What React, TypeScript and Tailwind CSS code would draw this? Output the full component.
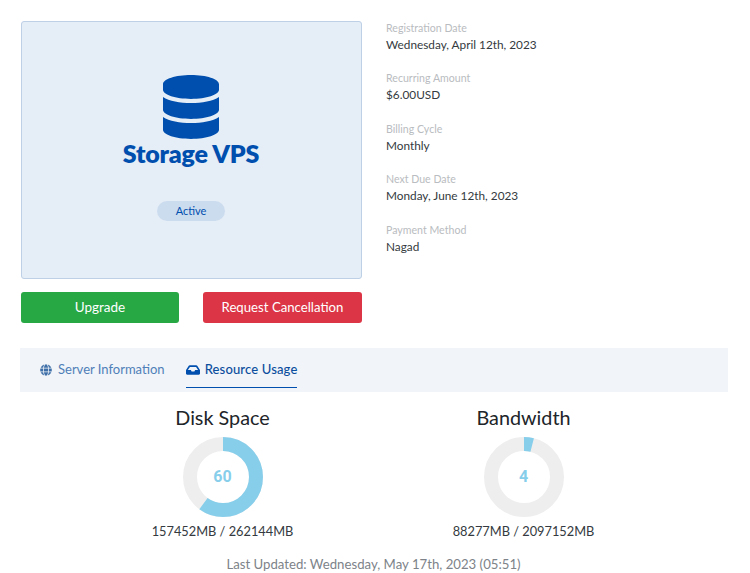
import { FaDatabase, FaGlobe, FaInbox } from "react-icons/fa";

const details = [
  { label: "Registration Date", value: "Wednesday, April 12th, 2023" },
  { label: "Recurring Amount", value: "$6.00USD" },
  { label: "Billing Cycle", value: "Monthly" },
  { label: "Next Due Date", value: "Monday, June 12th, 2023" },
  { label: "Payment Method", value: "Nagad" },
];

const usage = [
  { title: "Disk Space", percent: 60, text: "157452MB / 262144MB" },
  { title: "Bandwidth", percent: 4, text: "88277MB / 2097152MB" },
];

function Donut({ percent }: { percent: number }) {
  const radius = 33;
  const circumference = 2 * Math.PI * radius;

  return (
    <div className="relative h-20 w-20">
      <svg viewBox="0 0 80 80" className="h-20 w-20 -rotate-90">
        <circle cx="40" cy="40" r={radius} fill="none" stroke="#eeeeee" strokeWidth="14" />
        <circle
          cx="40"
          cy="40"
          r={radius}
          fill="none"
          stroke="#87ceeb"
          strokeWidth="14"
          strokeDasharray={`${(circumference * percent) / 100} ${circumference}`}
        />
      </svg>
      <span className="absolute inset-0 flex items-center justify-center font-['Roboto',sans-serif] text-base font-bold text-[#87ceeb]">
        {percent}
      </span>
    </div>
  );
}

export default function App() {
  return (
    <div className="h-[573px] w-[750px] overflow-hidden bg-white font-['Lato','Noto_Sans',sans-serif] text-[13px] text-[#343a40]">
      <div className="flex px-[21px] pt-[21px]">
        <div className="w-[341px]">
          <div className="flex h-[258px] flex-col items-center rounded-[3px] border border-[#bdd0e6] bg-[#e5edf6] pt-[53px] pr-px">
            <FaDatabase className="text-[64px] text-[#004fae]" />
            <h2 className="mt-[-1px] text-[25px] leading-[30px] font-extrabold tracking-[-0.2px] text-[#004fae]">
              Storage VPS
            </h2>
            <span className="mt-[33px] flex h-5 w-[68px] items-center justify-center rounded-full bg-[#ccdcef] text-[11px] text-[#004fae]">
              Active
            </span>
          </div>
          <div className="mt-[13px] flex justify-between">
            <button className="h-[31px] w-[158px] rounded-[3px] bg-[#28a745] text-[13.5px] text-white">
              Upgrade
            </button>
            <button className="h-[31px] w-[159px] rounded-[3px] bg-[#dc3545] text-[13.2px] text-white">
              Request Cancellation
            </button>
          </div>
        </div>
        <div className="ml-6 flex flex-col">
          {details.map((item) => (
            <div key={item.label} className="mb-[15px] h-[35.4px] -translate-y-px">
              <div className="text-[10.6px] leading-[17px] text-[#b9bcc0]">{item.label}</div>
              <div className="text-[11.8px] leading-[15px] text-[#343a40]">{item.value}</div>
            </div>
          ))}
        </div>
      </div>

      <div className="mx-5 mt-[25px] flex h-11 w-[708px] bg-[#f1f4f8] pl-5 text-[13px]">
        <div className="flex h-10 items-center gap-[6px] pt-1 text-[#4f7fb8]">
          <FaGlobe className="text-xs text-[#3f6fa8]" />
          <span>Server Information</span>
        </div>
        <div className="ml-[21px] flex h-10 items-center gap-[5px] border-b border-[#004fae] pt-1 text-[#0b4e9e]">
          <FaInbox className="text-sm text-[#004fae]" />
          <span className="font-medium tracking-[0.15px]">Resource Usage</span>
        </div>
      </div>

      <div className="flex justify-center pt-[13px] pr-1">
        {usage.map((item) => (
          <div key={item.title} className="flex w-[301px] flex-col items-center">
            <h3 className="text-[19.8px] leading-[24px] text-[#212529]">{item.title}</h3>
            <div className="mt-2">
              <Donut percent={item.percent} />
            </div>
            <div className="mt-[5px] text-[12.8px] leading-[18px] text-[#343a40]">{item.text}</div>
          </div>
        ))}
      </div>

      <p className="mt-[15px] pr-[3px] text-center text-[13.2px] leading-[18px] text-[#7d8389]">
        Last Updated: Wednesday, May 17th, 2023 (05:51)
      </p>
    </div>
  );
}
